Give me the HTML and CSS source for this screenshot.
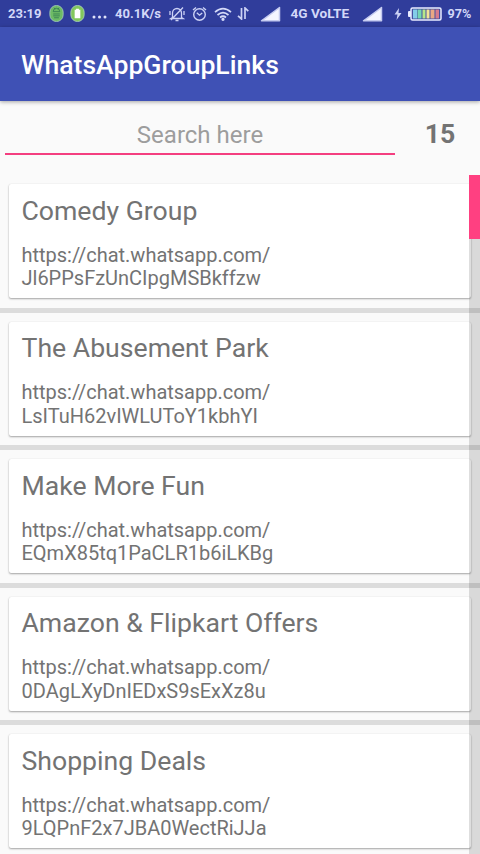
FILE: index.html
```html
<!DOCTYPE html>
<html lang="en">
<head>
<meta charset="utf-8">
<title>WhatsAppGroupLinks</title>
<link rel="stylesheet" href="styles.css">
</head>
<body>
<div class="screen">
  <div class="status">
    <span class="clock">23:19</span>
    <svg class="notif" width="15" height="17" viewBox="0 0 15 18"><rect x=".5" y=".5" width="14" height="17" rx="7" fill="#6dbb65" stroke="#9dc5b4"/><path d="M4 7a3.500 3.500 0 0 1 7 0zM4 9.500h7M4 11.500h7M5 13.500h5M5 3l1 1.500M10 3 9 4.500" fill="none" stroke="#2e7550" stroke-width=".8"/></svg>
    <svg class="notif2" width="15" height="17" viewBox="0 0 15 18"><rect x=".5" y=".5" width="14" height="17" rx="7" fill="#82c75c" stroke="#a5cbb4"/><path d="M4.500 5H6V4h3v1h1.500v9h-6z" fill="#fff"/></svg>
    <svg class="dots" width="16" height="4" viewBox="0 0 16 4" fill="#dfe2fa"><circle cx="2" cy="2" r="1.500"/><circle cx="7.500" cy="2" r="1.500"/><circle cx="13" cy="2" r="1.500"/></svg>
    <span class="speed">40.1K/s</span>
    <svg class="bell" width="16" height="16" viewBox="0 0 16 16" fill="none" stroke="#ccd2f5" stroke-width="1.300"><path d="M3.500 11.500V7a4.500 4.500 0 0 1 9 0v4.500l1.500 1H2zM6.500 14.500h3M14 1.500 2 14M1 5v4M15 5v4"/></svg>
    <svg class="alarm" width="15" height="16" viewBox="0 0 15 16" fill="none" stroke="#ccd2f5" stroke-width="1.400"><circle cx="7.500" cy="8.500" r="5.800"/><path d="M4.800 6.800 7.500 9.200l2.700-2.200M1 4l3-2.500M14 4l-3-2.500"/></svg>
    <svg class="wifi" width="18" height="14" viewBox="0 0 18 14" fill="none" stroke="#d5daf8" stroke-width="1.700"><path d="M1 5.200q8-7 16 0M3.500 8q5.500-4.700 11 0M6 10.500q3-2.500 6 0"/><circle cx="9" cy="12.300" r=".8"/></svg>
    <svg class="arrows" width="12" height="13" viewBox="0 0 12 13" fill="none" stroke="#ccd2f5" stroke-width="1.700"><path d="M4.500 1v11L1 8.800M8 12V1l3.300 3.200"/></svg>
    <svg class="signal" width="21" height="16" viewBox="0 0 21 16"><path d="M1.500 14.800 19.500 1.500v13.300z" fill="#f5f6ff" stroke="#c5cbf0" stroke-width="1.500" stroke-linejoin="round"/></svg>
    <span class="network">4G VoLTE</span>
    <svg class="signal2" width="21" height="16" viewBox="0 0 21 16"><path d="M1.500 14.800 19.500 1.500v13.300z" fill="#f5f6ff" stroke="#c5cbf0" stroke-width="1.500" stroke-linejoin="round"/></svg>
    <svg class="bolt" width="8" height="12" viewBox="0 0 8 12"><path d="M5 0 .5 6.500h3L2.500 12 7.500 5h-3z" fill="#ccd2f5"/></svg>
    <svg class="battery" width="34" height="14" viewBox="0 0 34 14"><rect x="0" y="4" width="3" height="6" rx="1" fill="#e8ebff"/><rect x="3" y="1" width="30" height="12" rx="1.500" fill="#46509f" stroke="#e8ebff" stroke-width="1.500"/><path d="M5 2.500h4v9H5z" fill="#83cde9"/><path d="M9.500 2.500h4v9h-4z" fill="#75d6b4"/><path d="M14.500 2.500h3v9h-3z" fill="#b6e78a"/><path d="M18.500 2.500h3v9h-3z" fill="#f3e397"/><path d="M22.500 2.500h4v9h-4z" fill="#e9a884"/><path d="M27.500 2.500H31v9h-3.500z" fill="#d57b8c"/></svg>
    <span class="percent">97%</span>
  </div>
  <header class="appbar">WhatsAppGroupLinks</header>
  <div class="search">
    <div class="field">Search here</div>
    <div class="count">15</div>
  </div>
  <main class="list">
    <div class="row"><article class="card"><h2>Comedy Group</h2><p>https://chat.whatsapp.com/<br>Jl6PPsFzUnCIpgMSBkffzw</p></article></div>
    <div class="row"><article class="card"><h2>The Abusement Park</h2><p>https://chat.whatsapp.com/<br>LsITuH62vIWLUToY1kbhYI</p></article></div>
    <div class="row"><article class="card"><h2>Make More Fun</h2><p>https://chat.whatsapp.com/<br>EQmX85tq1PaCLR1b6iLKBg</p></article></div>
    <div class="row"><article class="card"><h2>Amazon &amp; Flipkart Offers</h2><p>https://chat.whatsapp.com/<br>0DAgLXyDnIEDxS9sExXz8u</p></article></div>
    <div class="row"><article class="card"><h2>Shopping Deals</h2><p>https://chat.whatsapp.com/<br>9LQPnF2x7JBA0WectRiJJa</p></article></div>
    <div class="track"><div class="thumb"></div></div>
  </main>
</div>
</body>
</html>
```
FILE: styles.css
```css
* { box-sizing: border-box; }
body { margin: 0; background: #fafafa; font-family: Roboto, sans-serif; color: #737373; }
.screen { width: 480px; height: 854px; overflow: hidden; display: flex; flex-direction: column; }
.status { height: 27px; flex: none; display: flex; align-items: center; background: #303d9b; color: #d3d8f8; font-size: 13px; font-weight: 700; line-height: 27px; padding-left: 8px; white-space: nowrap; }
.status svg { flex: none; display: block; }
.status span { flex: none; }
.clock { width: 41px; font-size: 13px; }
.notif { margin-right: 6px; }
.notif2 { margin-right: 7px; }
.dots { margin: 7px 7px 0 0; }
.speed { width: 53.500px; }
.bell { margin-right: 7px; }
.alarm { margin-right: 7px; }
.wifi { margin-right: 5px; }
.arrows { margin-right: 11px; }
.signal { margin-right: 10px; }
.network { width: 71px; font-size: 13.600px; }
.signal2 { margin-right: 11px; }
.bolt { margin-right: 6px; }
.battery { margin-right: 6px; }
.percent { font-size: 12.600px; }
.appbar { height: 74px; flex: none; padding-left: 21px; background: #3f51b5; color: #fff; font-size: 26.600px; font-weight: 500; line-height: 76px; box-shadow: 0 1px 4px rgba(0,0,0,.35); z-index: 1; }
.search { height: 74px; flex: none; display: flex; padding: 14px 0 0 5px; }
.field { width: 390px; height: 40px; border-bottom: 2px solid #f43f80; text-align: center; color: #9d9d9d; font-size: 24px; line-height: 41px; }
.count { flex: 1; text-align: center; font-size: 26.600px; font-weight: 700; line-height: 38px; padding-left: 5px; }
.list { position: relative; height: 679px; flex: none; overflow: hidden; }
.row { height: 137.500px; padding: 9px 9px 0; border-bottom: 5px solid #dcdcdc; }
.card { height: 114px; padding: 10.700px 12.500px 0; background: #fff; border-radius: 2px; box-shadow: 0 1px 2px rgba(0,0,0,.34), 0 0 1px rgba(0,0,0,.12); }
.card h2 { margin: 0; font-size: 26.640px; font-weight: 400; line-height: 32px; }
.card p { margin: 17.300px 0 0; font-size: 20px; line-height: 23.500px; letter-spacing: -.01px; }
.track { position: absolute; top: 0; right: 0; width: 11px; height: 100%; background: rgba(0,0,0,.13); }
.thumb { height: 64px; background: #ff4081; }
```
